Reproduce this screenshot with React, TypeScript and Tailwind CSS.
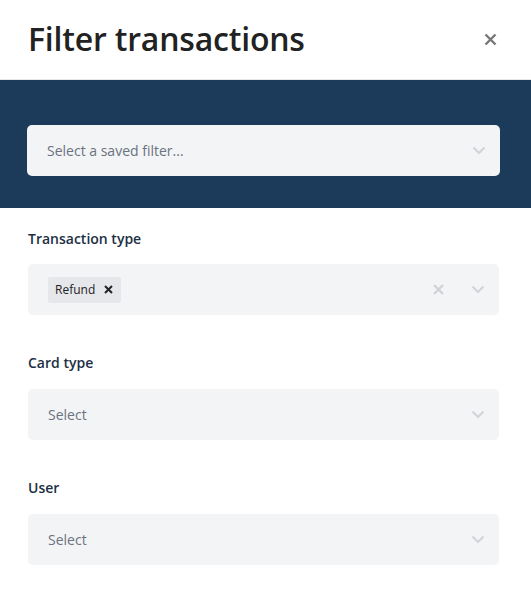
import React from "react";

const font = { fontFamily: '"Open Sans", "Noto Sans", sans-serif' };

function Chevron() {
  return (
    <svg width="14" height="9" viewBox="0 0 14 9" className="shrink-0">
      <path d="M1.5 1.5 L7 7 L12.5 1.5" fill="none" stroke="#d1d5db" strokeWidth="2.2" />
    </svg>
  );
}

function Field({ label, placeholder }: { label: string; placeholder: string }) {
  return (
    <div className="flex flex-col">
      <div className="text-[14px] font-semibold text-[#1c2f44] leading-5 h-[20px]">{label}</div>
      <div className="mt-[16px] h-[51px] rounded-[5px] bg-[#f3f4f6] flex items-center pl-[20px] pr-[14px]">
        <span className="flex-1 text-[14px] text-[#6b7280]">{placeholder}</span>
        <Chevron />
      </div>
    </div>
  );
}

export default function App() {
  return (
    <div style={font} className="w-[531px] h-[593px] bg-white">
      <div className="h-[80px] flex items-center justify-between pl-[28px] pr-[34px] border-b border-[#e5e7eb]">
        <h1 className="text-[32px] font-semibold text-[#222] leading-none tracking-[-0.2px] pb-[1px]">Filter transactions</h1>
        <svg width="13" height="13" viewBox="0 0 13 13">
          <path d="M1.5 1.5 L11.5 11.5 M11.5 1.5 L1.5 11.5" stroke="#777" strokeWidth="2.4" />
        </svg>
      </div>
      <div className="bg-[#1c3a5a] h-[128px] pl-[27px] pr-[31px] pt-[45px]">
        <div className="h-[51px] rounded-[5px] bg-[#f3f4f6] flex items-center pl-[20px] pr-[14px]">
          <span className="flex-1 text-[14px] text-[#6b7280]">Select a saved filter...</span>
          <Chevron />
        </div>
      </div>
      <div className="pl-[28px] pr-[32px] pt-[21px] flex flex-col gap-[38px]">
        <div className="flex flex-col">
          <div className="text-[14px] font-semibold text-[#1c2f44] leading-5 h-[20px]">Transaction type</div>
          <div className="mt-[15px] h-[51px] rounded-[5px] bg-[#f3f4f6] flex items-center pl-[20px] pr-[14px]">
            <div className="flex-1 flex">
              <span className="h-[26px] flex items-center gap-[9px] bg-[#e5e7eb] rounded-[2px] pl-[7px] pr-[8px] text-[12px] text-[#222]">
                Refund
                <svg width="9" height="9" viewBox="0 0 9 9">
                  <path d="M1 1 L8 8 M8 1 L1 8" stroke="#222" strokeWidth="2" />
                </svg>
              </span>
            </div>
            <svg width="11" height="11" viewBox="0 0 11 11" className="mr-[27px]">
              <path d="M1 1 L10 10 M10 1 L1 10" stroke="#cfd2d6" strokeWidth="2.4" />
            </svg>
            <Chevron />
          </div>
        </div>
        <Field label="Card type" placeholder="Select" />
        <Field label="User" placeholder="Select" />
      </div>
    </div>
  );
}
